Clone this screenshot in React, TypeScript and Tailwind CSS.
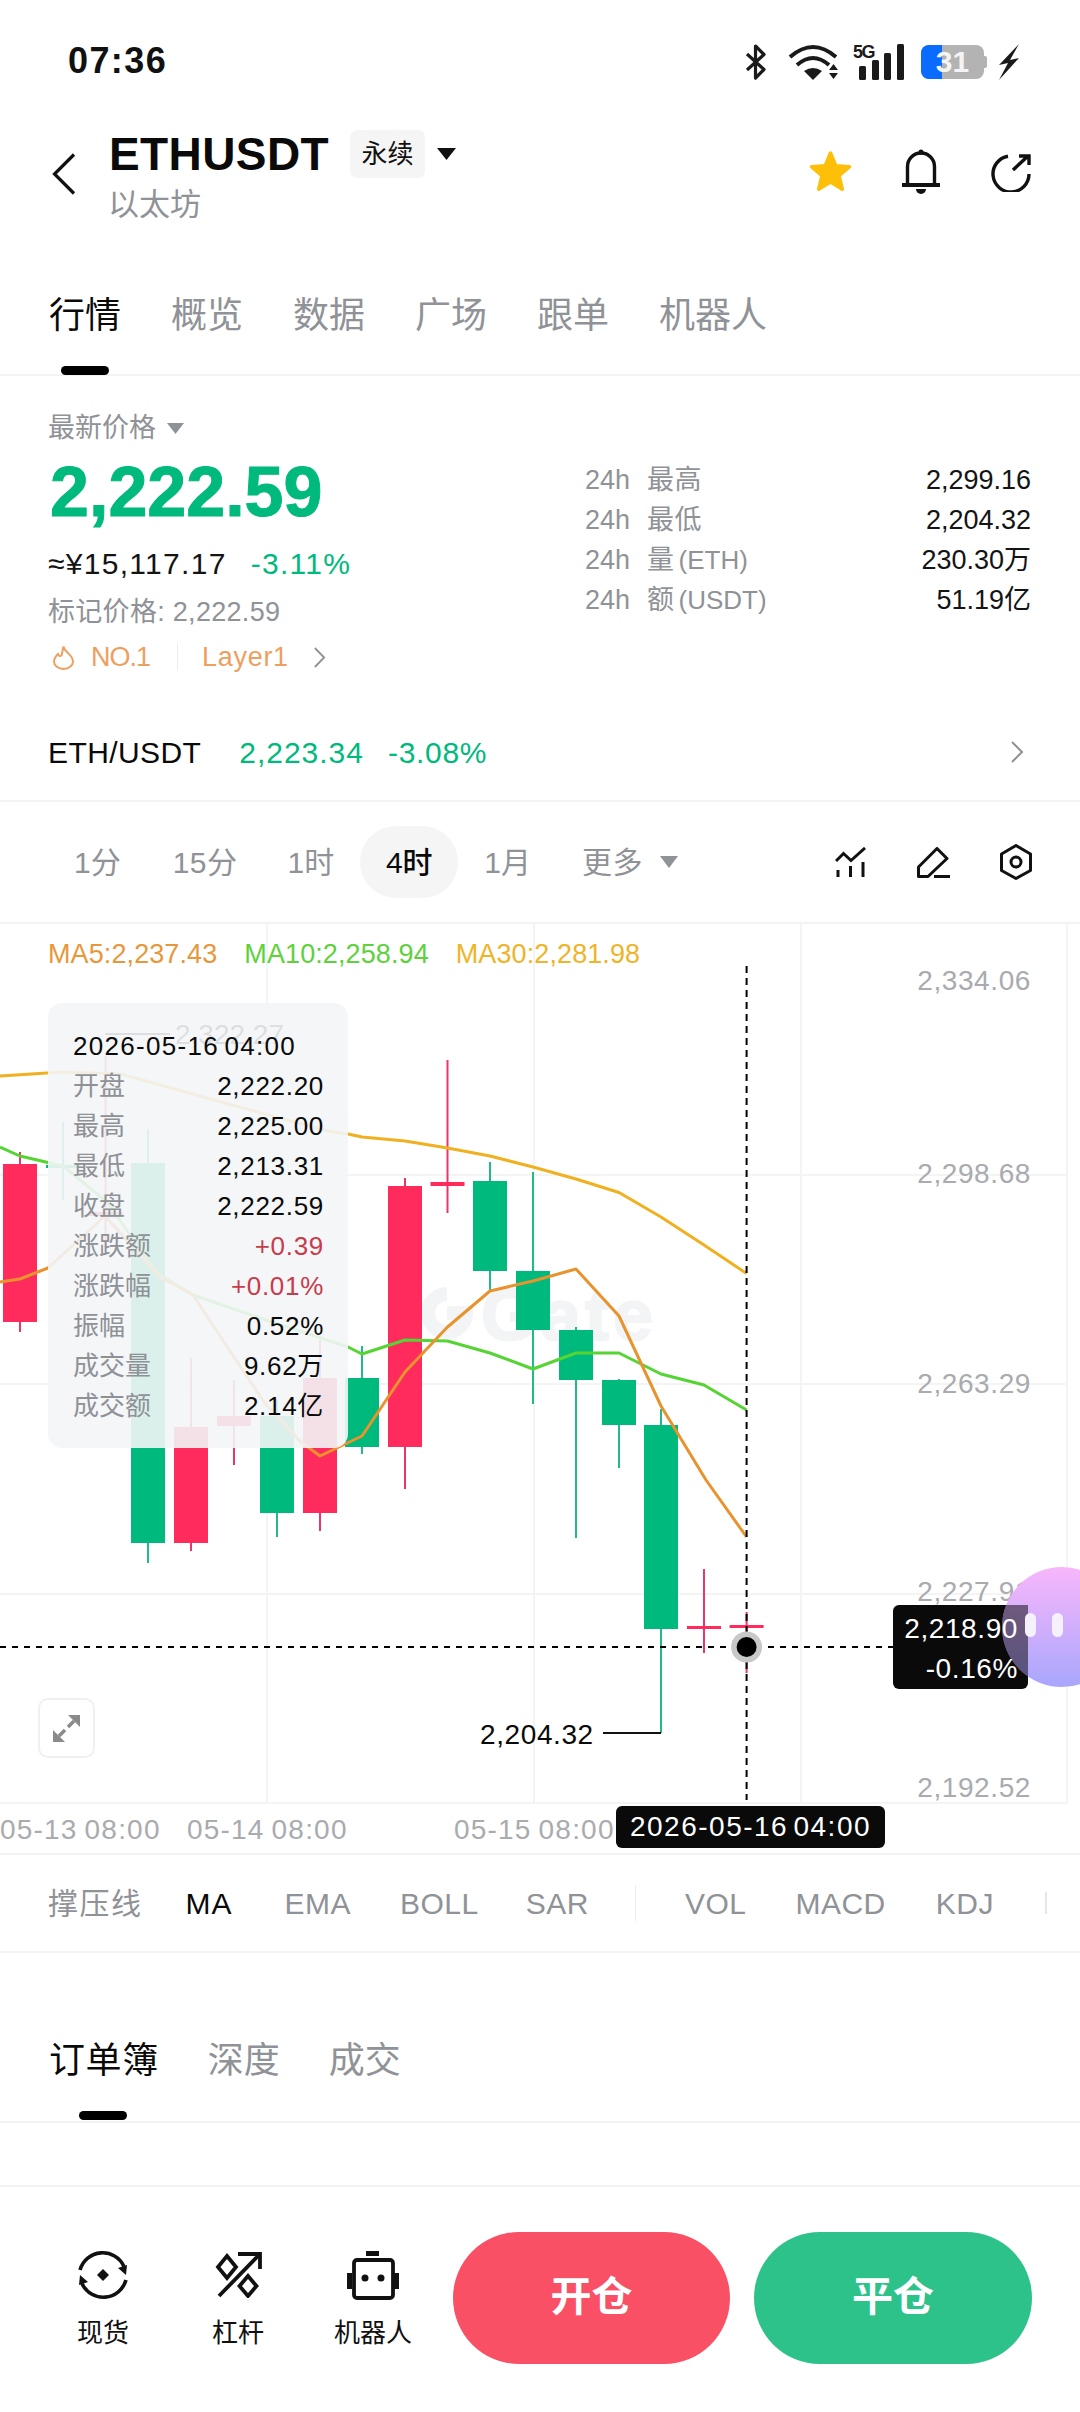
const GREEN = "#00b97c";
const RED = "#ff2b5c";

type C = { x: number; t: number; a: number; b: number; l: number; up: boolean };
const candles: C[] = [
  { x: 20, t: 1152, a: 1164, b: 1322, l: 1332, up: true },
  { x: 63, t: 1122, a: 1165, b: 1168, l: 1200, up: false },
  { x: 105.6, t: 1056, a: 1212, b: 1216, l: 1250, up: true },
  { x: 148, t: 1129, a: 1163, b: 1543, l: 1563, up: false },
  { x: 191, t: 1358, a: 1427, b: 1543, l: 1551, up: true },
  { x: 234, t: 1380, a: 1416, b: 1426, l: 1465, up: true },
  { x: 277, t: 1400, a: 1416, b: 1513, l: 1537, up: false },
  { x: 320, t: 1340, a: 1378, b: 1513, l: 1531, up: true },
  { x: 362, t: 1346, a: 1378, b: 1447, l: 1454, up: false },
  { x: 405, t: 1178, a: 1186, b: 1447, l: 1489, up: true },
  { x: 447.5, t: 1060, a: 1182, b: 1186, l: 1213, up: true },
  { x: 490, t: 1162, a: 1181, b: 1271, l: 1291, up: false },
  { x: 533, t: 1172, a: 1271, b: 1330, l: 1404, up: false },
  { x: 576, t: 1327, a: 1330, b: 1380, l: 1538, up: false },
  { x: 619, t: 1379, a: 1380, b: 1425, l: 1468, up: false },
  { x: 661, t: 1409, a: 1425, b: 1629, l: 1733, up: false },
  { x: 704, t: 1569, a: 1626, b: 1629, l: 1653, up: true },
  { x: 746.6, t: 1612, a: 1625, b: 1628, l: 1673, up: true },
];

const ma30 = "0,1076 63,1072 121,1074 221,1102 328,1131 348,1134 362,1137 405,1141 447.5,1148 490,1156 533,1167 576,1179 619,1192.5 661,1217 704,1245 746.6,1273.5";
const ma10 = "0,1147 20,1156 63,1166 107,1202 157,1273 193,1295 260,1318 348,1347 362,1354 405,1340 447.5,1341 490,1353 533,1369 576,1353 619,1353 661,1374 704,1385 746.6,1410";
const ma5 = "0,1282 20,1279 48,1268 105,1216 160,1277 193,1295 228,1348 264,1402 300,1441 320,1456 362,1436 405,1372 447.5,1327 490,1291 533,1281 576,1269 619,1316 661,1406 706,1480 746.6,1537";

function Tri({ className }: { className: string }) {
  return (
    <svg viewBox="0 0 10 7" preserveAspectRatio="none" className={className}>
      <path d="M0 0H10L5 7Z" fill="currentColor" />
    </svg>
  );
}

function Chev({ className }: { className: string }) {
  return (
    <svg viewBox="0 0 14 22" preserveAspectRatio="none" className={className} fill="none" stroke="currentColor" strokeWidth="2">
      <path d="M2 1L12 11L2 21" />
    </svg>
  );
}

function StatusBar() {
  return (
    <div className="h-[124px] flex items-center pl-[68px] pr-[60px]">
      <div className="text-[36px] font-semibold tracking-[1.400px] text-[#111] leading-none mb-[3px]">07:36</div>
      <div className="ml-auto flex items-center text-[#1a1a1a]">
        <svg width="21" height="36" viewBox="0 0 21 36" fill="none" stroke="currentColor" strokeWidth="3.2" strokeLinejoin="round">
          <path d="M2 10L19 25.5L10.5 34V2L19 10.5L2 26" />
        </svg>
        <svg className="ml-[22px]" width="52" height="36" viewBox="0 0 52 36" fill="none" stroke="currentColor">
          <path d="M2 13Q25 -7 48 13" strokeWidth="4" />
          <path d="M9 21Q25 7 41 21" strokeWidth="4" />
          <path d="M16 27Q25 21 34 27L25 36Z" fill="currentColor" stroke="none" />
          <path d="M41 26L45.500 20L50 26ZM41 29H50L45.500 35Z" fill="currentColor" stroke="none" />
        </svg>
        <div className="ml-[13px] relative w-[51px] h-[36px]">
          <div className="absolute left-0 top-[-2px] text-[18px] leading-[20px] font-bold tracking-[-1.5px]">5G</div>
          <svg className="absolute inset-0" width="51" height="36" viewBox="0 0 51 36" fill="currentColor">
            <rect x="6" y="22" width="7" height="14" rx="1.500" />
            <rect x="19" y="16" width="7" height="20" rx="1.500" />
            <rect x="31" y="9" width="7" height="27" rx="1.500" />
            <rect x="44" y="0" width="7" height="36" rx="1.500" />
          </svg>
        </div>
        <div className="ml-[17px] flex items-center">
          <div className="relative w-[63px] h-[34px] rounded-[8px] bg-[#b3b3b3] overflow-hidden">
            <div className="absolute left-0 top-0 bottom-0 w-[21px] bg-[#0a6cff]" />
            <div className="absolute inset-0 flex items-center justify-center text-[30px] font-bold text-[#f4f4f4] leading-none">31</div>
          </div>
          <div className="w-[3px] h-[12px] bg-[#b3b3b3] rounded-r-[2px]" />
        </div>
        <svg className="ml-[11px]" width="22" height="36" viewBox="0 0 22 36" fill="currentColor">
          <path d="M21 0L1 21L10 19L1 36L21 14L12 16Z" />
        </svg>
      </div>
    </div>
  );
}

function Header() {
  return (
    <div className="h-[117px] relative flex items-start">
      <svg className="ml-[52px] mt-[29px]" width="24" height="42" viewBox="0 0 24 42" fill="none" stroke="#111" strokeWidth="3.200">
        <path d="M22 1.500L2.500 21L22 40.500" />
      </svg>
      <div className="ml-[33px] flex flex-col">
        <div className="flex items-center h-[56px] mt-[2px]">
          <span className="text-[46px] font-bold text-[#0a0a0a] leading-none tracking-[0.4px]">ETHUSDT</span>
          <span className="ml-[21px] w-[75px] h-[48px] rounded-[7px] bg-[#f5f5f5] flex items-center justify-center text-[26px] text-[#111]">永续</span>
          <Tri className="ml-[12px] w-[19px] h-[12px] text-[#111]" />
        </div>
        <div className="text-[31px] leading-[40px] text-[#8f9296] mt-[3px] -ml-[1px]">以太坊</div>
      </div>
      <div className="ml-auto pr-[49px] flex items-start mt-[25px]">
        <svg width="45" height="44" viewBox="0 0 45 44" fill="#fdbf08" stroke="#fdbf08" strokeWidth="3.500" strokeLinejoin="round">
          <path d="M22.500 4L27.800 16.700L41.500 17.800L31.100 26.800L34.300 40.200L22.500 33L10.700 40.200L13.900 26.800L3.500 17.800L17.200 16.700Z" />
        </svg>
        <svg className="ml-[48px]" width="40" height="45" viewBox="0 0 40 45" fill="none" stroke="#111" strokeWidth="3.400">
          <path d="M6.500 36V17.500A13.500 13.500 0 0 1 33.500 17.500V36" />
          <path d="M1 36H39" strokeWidth="3.800" />
          <circle cx="20" cy="3" r="2.500" fill="#111" stroke="none" />
          <path d="M15 40H25A5 5 0 0 1 15 40Z" fill="#111" stroke="none" />
        </svg>
        <svg className="ml-[50px] mt-[5px]" width="40" height="38" viewBox="0 0 40 38" fill="none" stroke="#111" strokeWidth="3.400">
          <path d="M17 2.200A18 18 0 1 0 38 20" />
          <path d="M22 16L37 2M28 2H38V11" />
        </svg>
      </div>
    </div>
  );
}

function Tabs() {
  const items = ["概览", "数据", "广场", "跟单", "机器人"];
  return (
    <div className="h-[135px] border-b-2 border-[#f3f3f3] pt-[53px] px-[49px]">
      <div className="flex gap-[50px] text-[36px] leading-[44px]">
        <span className="text-[#0a0a0a]">行情</span>
        {items.map((t) => (
          <span key={t} className="text-[#8f9296]">{t}</span>
        ))}
      </div>
      <div className="mt-[28px] ml-[12px] w-[48px] h-[9px] rounded-full bg-black" />
    </div>
  );
}

function StatRow({ a, b, v }: { a: string; b: string; v: string }) {
  return (
    <div className="h-[40px] flex items-center text-[27px]">
      <span className="text-[#8f9296] w-[62px]">24h</span>
      <span className="text-[#8f9296] tracking-[0.5px]">{a}</span>
      {b && <span className="text-[#8f9296] ml-[4px] text-[26px]">{b}</span>}
      <span className="ml-auto text-[#141414]">{v}</span>
    </div>
  );
}

function PriceBlock() {
  return (
    <div>
      <div className="h-[330px] flex pl-[48px] pr-[49px]">
        <div className="pt-[34px]">
          <div className="flex items-center h-[36px] text-[27px] text-[#8f9296]">
            最新价格
            <Tri className="ml-[11px] w-[17px] h-[11px] text-[#8f9296]" />
          </div>
          <div className="mt-[6px] h-[80px] text-[70px] leading-[80px] font-bold text-[#00b97c] ml-[2px] [-webkit-text-stroke:1px_#00b97c]">2,222.59</div>
          <div className="mt-[11px] h-[40px] flex items-center text-[30px] tracking-[1.300px]">
            <span className="text-[#141414]">≈¥15,117.17</span>
            <span className="ml-[24px] text-[#00b97c] font-medium">-3.11%</span>
          </div>
          <div className="mt-[11px] h-[36px] flex items-center text-[27px] text-[#8f9296] tracking-[0.3px]">标记价格: 2,222.59</div>
          <div className="mt-[9px] h-[36px] flex items-center text-[27px] text-[#ee9f5f]">
            <svg className="ml-[4px]" width="23" height="25" viewBox="0 0 23 25" fill="none" stroke="currentColor" strokeWidth="2">
              <path d="M11.500 1.500C12.500 7.500 21 9.500 21 16.500A9.500 7.500 0 0 1 2 16.500C2 13 4 11 6 9C7 11.500 8 11.500 9.500 10.500C10.500 7.500 10.500 4.500 11.500 1.500Z" />
            </svg>
            <span className="ml-[16px] tracking-[-1px]">NO.1</span>
            <span className="ml-[27px] w-[1px] h-[28px] bg-[#ececec]" />
            <span className="ml-[24px] tracking-[0.7px]">Layer1</span>
            <Chev className="ml-[24px] w-[13px] h-[21px] text-[#8f9296]" />
          </div>
        </div>
        <div className="ml-auto w-[446px] pt-[84px]">
          <StatRow a="最高" b="" v="2,299.16" />
          <StatRow a="最低" b="" v="2,204.32" />
          <StatRow a="量" b="(ETH)" v="230.30万" />
          <StatRow a="额" b="(USDT)" v="51.19亿" />
        </div>
      </div>
      <div className="h-[96px] border-b-2 border-[#f3f3f3] flex items-center pl-[48px] pr-[56px] pb-[2px] text-[30px]">
        <span className="text-[#0a0a0a] tracking-[0.4px]">ETH/USDT</span>
        <span className="ml-[38px] text-[#00b97c] tracking-[1px]">2,223.34</span>
        <span className="ml-[24px] text-[#00b97c] tracking-[0.7px]">-3.08%</span>
        <Chev className="ml-auto w-[14px] h-[22px] text-[#8f9296]" />
      </div>
    </div>
  );
}

function Periods() {
  return (
    <div className="h-[122px] border-b-2 border-[#f3f3f3] flex items-center text-[30px] text-[#8f9296] pr-[48px]">
      <span className="ml-[74px]">1分</span>
      <span className="ml-[52px] tracking-[0.5px]">15分</span>
      <span className="ml-[50px]">1时</span>
      <span className="ml-[26px] w-[98px] h-[72px] rounded-full bg-[#f5f5f5] flex items-center justify-center text-[#0a0a0a] font-medium">4时</span>
      <span className="ml-[26px]">1月</span>
      <span className="ml-[51px] tracking-[0.5px]">更多</span>
      <Tri className="ml-[17px] w-[18px] h-[12px] text-[#8f9296]" />
      <div className="ml-auto flex items-center text-[#111]">
        <svg width="31" height="30" viewBox="0 0 31 30" fill="none" stroke="currentColor" strokeWidth="3">
          <path d="M1 14L8.500 6.500L16 13.500L30 1" />
          <path d="M3 23V30M15.500 19V30M28 15V30" />
        </svg>
        <svg className="ml-[51px]" width="33" height="31" viewBox="0 0 33 31" fill="none" stroke="currentColor" strokeWidth="3" strokeLinejoin="round">
          <path d="M20 1.500L30 11.500L11 29.500H1.500V20Z" />
          <path d="M17 29.500H33" />
        </svg>
        <svg className="ml-[50px]" width="32" height="36" viewBox="0 0 32 36" fill="none" stroke="currentColor" strokeWidth="3" strokeLinejoin="round">
          <path d="M16 1.500L30.500 10V26.500L16 34.500L1.500 26.500V10Z" />
          <circle cx="16" cy="18" r="5" />
        </svg>
      </div>
    </div>
  );
}

function TipRow({ k, v, red }: { k: string; v: string; red?: boolean }) {
  return (
    <div className="h-[40px] flex items-center justify-between">
      <span className="text-[#8e9196] text-[26px]">{k}</span>
      <span className={red ? "text-[#c83b4c] tracking-[0.7px]" : "text-[#0a0a0a] tracking-[0.7px]"}>{v}</span>
    </div>
  );
}

function Chart() {
  return (
    <div className="relative h-[931px] border-b-2 border-[#f3f3f3]">
      <svg className="absolute left-0 top-0" width="1080" height="929" viewBox="0 924 1080 929">
        <g stroke="#f4f4f5" strokeWidth="2">
          <path d="M267 924V1803M534 924V1803M801 924V1803M1067 924V1803" />
          <path d="M0 1175H1067M0 1384H1067M0 1594H1067M0 1803H1067" />
        </g>
        <g>
          <path d="M447 1294A19 19 0 1 0 466 1313H447" fill="none" stroke="#f3f4f5" strokeWidth="14" />
          <text x="481" y="1340" fontSize="72" fontWeight="700" letterSpacing="4" fill="#f3f4f5" stroke="#f3f4f5" strokeWidth="2" fontFamily="Liberation Sans">Gate</text>
        </g>
        {candles.map((c) => {
          const col = c.up ? RED : GREEN;
          const wick = c.up ? "#e8356a" : "#22b98b";
          return (
            <g key={c.x}>
              <line x1={c.x} x2={c.x} y1={c.t} y2={c.l} stroke={wick} strokeWidth="2" />
              <rect x={c.x - 17} y={c.a} width="34" height={c.b - c.a} fill={col} />
            </g>
          );
        })}
        <polyline points={ma30} fill="none" stroke="#f0b020" strokeWidth="3" strokeLinejoin="round" />
        <polyline points={ma10} fill="none" stroke="#55d434" strokeWidth="3" strokeLinejoin="round" />
        <polyline points={ma5} fill="none" stroke="#e8932e" strokeWidth="3" strokeLinejoin="round" />
        <path d="M105 1034H170" stroke="#111" strokeWidth="2" />
        <text x="175" y="1044" fontSize="28" fill="#111" fontFamily="Liberation Sans">2,322.27</text>
        <path d="M603 1733H661" stroke="#111" strokeWidth="2" />
        <line x1="746.6" x2="746.6" y1="966" y2="1800" stroke="#000" strokeWidth="2" strokeDasharray="7 5" />
        <line x1="0" x2="893" y1="1647" y2="1647" stroke="#000" strokeWidth="2" strokeDasharray="6 6" />
        <circle cx="746.6" cy="1647" r="15.500" fill="#c8c8c8" />
        <circle cx="746.6" cy="1647" r="10" fill="#000" />
      </svg>

      <div className="absolute left-[48px] top-[12px] flex gap-[27px] text-[27px] leading-[36px] tracking-[0.1px]">
        <span className="text-[#e8973a]">MA5:2,237.43</span>
        <span className="text-[#5ed13c]">MA10:2,258.94</span>
        <span className="text-[#efb428]">MA30:2,281.98</span>
      </div>

      <div className="absolute left-[48px] top-[79px] w-[300px] h-[445px] rounded-[14px] bg-[#f3f5f7]/90 pl-[25px] pr-[24px] pt-[23px] text-[26px] leading-[40px]">
        <div className="h-[40px] flex items-center text-[#0a0a0a] tracking-[1.300px] [word-spacing:-3px]">2026-05-16 04:00</div>
        <TipRow k="开盘" v="2,222.20" />
        <TipRow k="最高" v="2,225.00" />
        <TipRow k="最低" v="2,213.31" />
        <TipRow k="收盘" v="2,222.59" />
        <TipRow k="涨跌额" v="+0.39" red />
        <TipRow k="涨跌幅" v="+0.01%" red />
        <TipRow k="振幅" v="0.52%" />
        <TipRow k="成交量" v="9.62万" />
        <TipRow k="成交额" v="2.14亿" />
      </div>

      <div className="absolute right-[49px] top-[37px] text-[28px] leading-[40px] text-[#a9abaf] tracking-[0.6px]">2,334.06</div>
      <div className="absolute right-[49px] top-[230px] text-[28px] leading-[40px] text-[#a9abaf] tracking-[0.6px]">2,298.68</div>
      <div className="absolute right-[49px] top-[440px] text-[28px] leading-[40px] text-[#a9abaf] tracking-[0.6px]">2,263.29</div>
      <div className="absolute right-[49px] top-[648px] text-[28px] leading-[40px] text-[#a9abaf] tracking-[0.6px]">2,227.91</div>
      <div className="absolute right-[49px] top-[844px] text-[28px] leading-[40px] text-[#a9abaf] tracking-[0.6px]">2,192.52</div>

      <div className="absolute left-0 top-[886px] text-[28px] leading-[40px] text-[#a9abaf] tracking-[1.200px] [word-spacing:-2px]">05-13 08:00</div>
      <div className="absolute left-[187px] top-[886px] text-[28px] leading-[40px] text-[#a9abaf] tracking-[1.200px] [word-spacing:-2px]">05-14 08:00</div>
      <div className="absolute left-[454px] top-[886px] text-[28px] leading-[40px] text-[#a9abaf] tracking-[1.200px] [word-spacing:-2px]">05-15 08:00</div>

      <div className="absolute left-[616px] top-[882px] w-[269px] h-[42px] rounded-[6px] bg-[#0a0a0a] text-white text-[28px] tracking-[1.500px] [word-spacing:-4px] flex items-center justify-center">2026-05-16 04:00</div>

      <div className="absolute left-[480px] top-[793px] text-[28px] leading-[36px] text-[#0a0a0a] tracking-[0.6px]">2,204.32</div>

      <div className="absolute left-[38px] top-[774px] w-[57px] h-[60px] rounded-[10px] border-2 border-[#f0f0f0] bg-white flex items-center justify-center">
        <svg width="29" height="29" viewBox="0 0 29 29" fill="#8a8a8a" stroke="#8a8a8a">
          <path d="M16 1H28V13Z" stroke="none" />
          <path d="M1 16V28H13Z" stroke="none" />
          <path d="M22 7L16 13M7 22L13 16" strokeWidth="3.500" />
        </svg>
      </div>

      <div className="absolute left-[893px] top-[681px] w-[135px] h-[84px] rounded-[6px] bg-[#0a0a0a] pr-[10px] text-right text-white text-[28px] leading-[40px] tracking-[0.6px] pt-[4px]">
        <div className="relative z-30">2,218.90</div>
        <div className="relative z-30">-0.16%</div>
      </div>

      <div className="absolute left-[1002px] top-[643px] z-20 w-[120px] h-[120px] rounded-full overflow-hidden bg-gradient-to-b from-[#f8b6fb] to-[#a8a6fc]">
        <div className="absolute left-0 top-[38px] w-[26px] h-[84px] bg-black/50" />
        <div className="absolute left-[23px] top-[46px] w-[11px] h-[24px] rounded-full bg-[#f4f0fc]" />
        <div className="absolute left-[50px] top-[46px] w-[11px] h-[24px] rounded-full bg-[#f4f0fc]" />
      </div>
    </div>
  );
}

function Indicators() {
  return (
    <div className="h-[98px] border-b-2 border-[#f3f3f3] flex items-center text-[30px] text-[#8f9296]">
      <span className="ml-[48px] tracking-[1.500px]">撑压线</span>
      <span className="ml-[43px] text-[#0a0a0a] tracking-[1px]">MA</span>
      <span className="ml-[52px] tracking-[0.5px]">EMA</span>
      <span className="ml-[49px] tracking-[0.5px]">BOLL</span>
      <span className="ml-[47px] tracking-[0.5px]">SAR</span>
      <span className="ml-[46px] w-[1px] h-[36px] bg-[#ececec]" />
      <span className="ml-[49px] tracking-[0.5px]">VOL</span>
      <span className="ml-[49px] tracking-[0.5px]">MACD</span>
      <span className="ml-[50px] tracking-[0.5px]">KDJ</span>
      <span className="ml-[51px] w-[2px] h-[22px] bg-[#e6e6e6]" />
    </div>
  );
}

function OrderTabs() {
  return (
    <div className="h-[170px] border-b-2 border-[#f3f3f3] pt-[86px] pl-[49px]">
      <div className="flex gap-[49px] text-[36px] leading-[44px]">
        <span className="text-[#0a0a0a] tracking-[0.6px]">订单簿</span>
        <span className="text-[#8f9296]">深度</span>
        <span className="text-[#8f9296]">成交</span>
      </div>
      <div className="mt-[28px] ml-[30px] w-[48px] h-[9px] rounded-full bg-black" />
    </div>
  );
}

function BottomItem({ label, children }: { label: string; children: React.ReactNode }) {
  return (
    <div className="w-[100px] flex flex-col items-center pt-[17px]">
      <div className="h-[52px] flex items-center justify-center">{children}</div>
      <div className="mt-[14px] text-[26px] leading-[36px] text-[#111] whitespace-nowrap">{label}</div>
    </div>
  );
}

function Bottom() {
  return (
    <div className="flex-1 border-t-2 border-[#f3f3f3] mt-[62px] pt-[45px] pl-[53px] flex items-start">
      <div className="flex gap-[35px]">
        <BottomItem label="现货">
          <svg width="52" height="52" viewBox="0 0 52 52" fill="none" stroke="#111" strokeWidth="3.600">
            <path d="M3 21A23.500 23.500 0 0 1 47 17.500" />
            <path d="M49 31A23.500 23.500 0 0 1 5 34.500" />
            <path d="M41 19L50 16L49 26Z" fill="#111" stroke="none" />
            <path d="M11 33L2 36L3 26Z" fill="#111" stroke="none" />
            <path d="M26 20L32 26L26 32L20 26Z" fill="#111" stroke="none" />
          </svg>
        </BottomItem>
        <BottomItem label="杠杆">
          <svg width="47" height="46" viewBox="0 0 47 46" fill="none" stroke="#111" strokeWidth="3.800" strokeLinejoin="miter">
            <path d="M12 4L21 15L12 26L3 15Z" />
            <path d="M33 24L41.500 34L33 44L24.500 34Z" />
            <path d="M4 44L44 3" />
            <path d="M23 2H45V17" />
          </svg>
        </BottomItem>
        <BottomItem label="机器人">
          <svg width="52" height="49" viewBox="0 0 52 49" fill="none" stroke="#111" strokeWidth="3.800">
            <rect x="19" y="0" width="13" height="5" fill="#111" stroke="none" />
            <rect x="7" y="9" width="39" height="38" rx="3" />
            <rect x="0" y="22" width="5" height="16" fill="#111" stroke="none" />
            <rect x="47" y="22" width="5" height="16" fill="#111" stroke="none" />
            <circle cx="18" cy="27" r="3.500" fill="#111" stroke="none" />
            <circle cx="34" cy="27" r="3.500" fill="#111" stroke="none" />
          </svg>
        </BottomItem>
      </div>
      <div className="ml-[30px] w-[277px] h-[132px] rounded-full bg-[#f95066] flex items-center justify-center text-white text-[41px] font-bold">开仓</div>
      <div className="ml-[24px] w-[278px] h-[132px] rounded-full bg-[#2dc28a] flex items-center justify-center text-white text-[41px] font-bold">平仓</div>
    </div>
  );
}

export default function App() {
  return (
    <div className="w-[1080px] h-[2412px] bg-white overflow-hidden flex flex-col font-['Liberation_Sans','Noto_Sans_CJK_SC',sans-serif]">
      <StatusBar />
      <Header />
      <Tabs />
      <PriceBlock />
      <Periods />
      <Chart />
      <Indicators />
      <OrderTabs />
      <Bottom />
    </div>
  );
}
